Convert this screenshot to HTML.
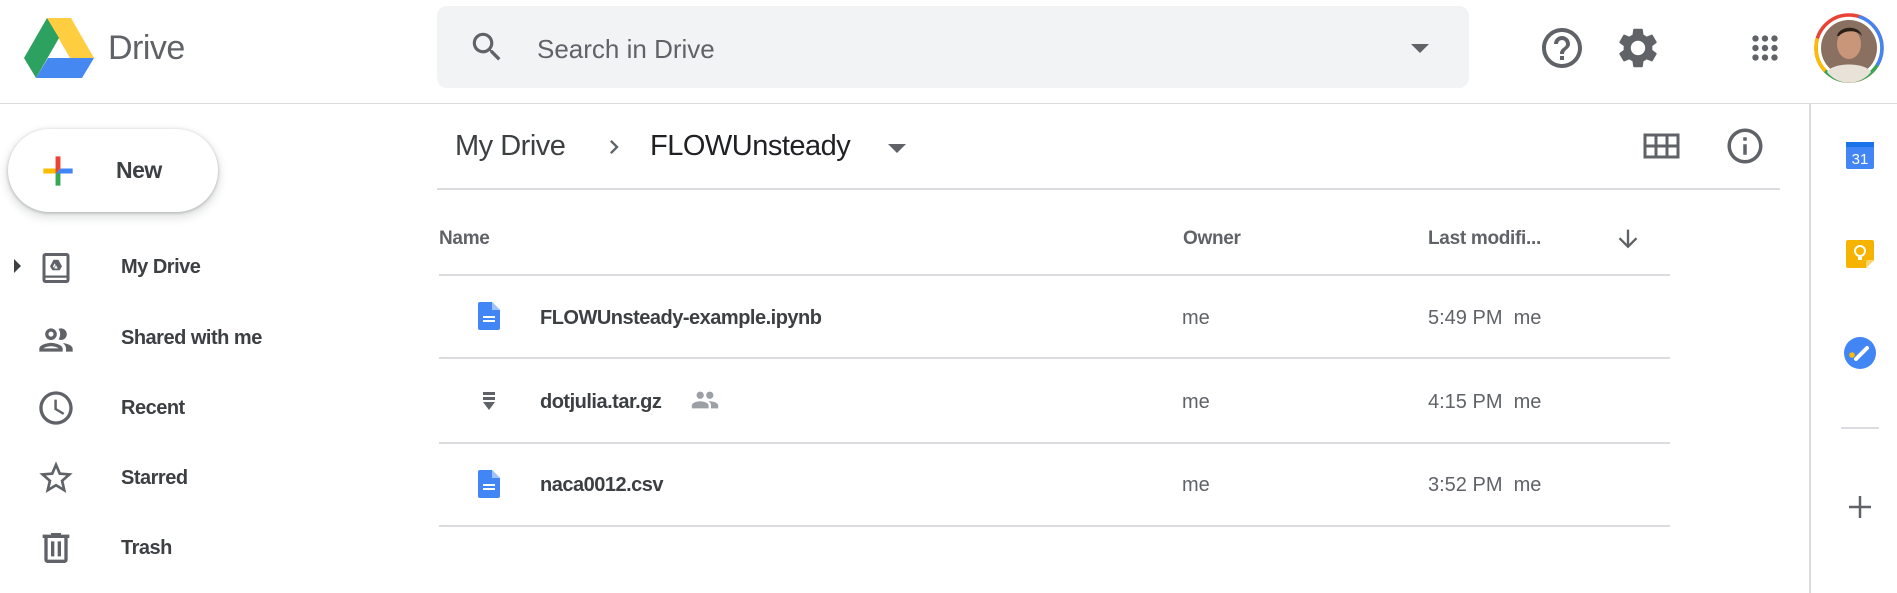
<!DOCTYPE html>
<html><head><meta charset="utf-8"><style>
*{margin:0;padding:0;box-sizing:border-box}
body{width:1897px;height:593px;overflow:hidden;background:#fff;font-family:"Liberation Sans",Arial,sans-serif;color:#3c4043;position:relative}
.a{position:absolute}
.t{white-space:nowrap}
.nav{font-size:20px;font-weight:bold;color:#3c4043;left:121px;letter-spacing:-0.5px}
.hd{font-size:19px;font-weight:bold;color:#5f6368;letter-spacing:-0.3px}
.fn{font-size:20px;font-weight:bold;color:#3c4043;left:540px;letter-spacing:-0.5px}
.gr{font-size:20px;color:#5f6368}
.ln{height:2px;background:#dadce0;left:439px;width:1231px}
</style></head><body>
<!-- header -->
<svg class="a" style="left:24px;top:18px" width="70" height="60" viewBox="0 0 70 60">
<path d="M23 0h24l23 40H46z" fill="#ffcd40"/>
<path d="M23 0L0 40l12 20 23-40z" fill="#2da160"/>
<path d="M12 60h46l12-20H24z" fill="#4688f1"/>
</svg>
<div class="a t" style="left:108px;top:29px;font-size:34px;color:#5f6368;letter-spacing:-0.5px">Drive</div>
<div class="a" style="left:437px;top:6px;width:1032px;height:82px;background:#f1f3f4;border-radius:10px"></div>
<svg class="a" style="left:468px;top:28px" width="38" height="38" viewBox="0 0 24 24"><path fill="#5f6368" d="M15.5 14h-.79l-.28-.27A6.47 6.47 0 0016 9.5 6.5 6.5 0 109.5 16c1.61 0 3.09-.59 4.23-1.57l.27.28v.79l5 4.99L20.49 19l-4.99-5zm-6 0C7.01 14 5 11.99 5 9.5S7.01 5 9.5 5 14 7.01 14 9.5 11.99 14 9.5 14z"/></svg>
<div class="a t" style="left:537px;top:34px;font-size:26px;color:#5f6368">Search in Drive</div>
<div class="a" style="left:1411px;top:44px;width:0;height:0;border-left:9px solid transparent;border-right:9px solid transparent;border-top:9px solid #5f6368"></div>
<svg class="a" style="left:1538px;top:24px" width="48" height="48" viewBox="0 0 24 24"><path fill="#5f6368" d="M11 18h2v-2h-2v2zm1-16C6.48 2 2 6.48 2 12s4.48 10 10 10 10-4.48 10-10S17.52 2 12 2zm0 18c-4.41 0-8-3.59-8-8s3.59-8 8-8 8 3.59 8 8-3.59 8-8 8zm0-14c-2.21 0-4 1.79-4 4h2c0-1.1.9-2 2-2s2 .9 2 2c0 2-3 1.75-3 5h2c0-2.25 3-2.5 3-5 0-2.21-1.79-4-4-4z"/></svg>
<svg class="a" style="left:1614px;top:24px" width="48" height="48" viewBox="0 0 24 24"><path fill="#5f6368" d="M19.14 12.94c.04-.3.06-.61.06-.94 0-.32-.02-.64-.07-.94l2.03-1.58a.49.49 0 00.12-.61l-1.92-3.32a.488.488 0 00-.59-.22l-2.39.96c-.5-.38-1.030-.7-1.62-.94l-.36-2.54a.484.484 0 00-.48-.41h-3.84c-.24 0-.43.17-.47.41l-.36 2.54c-.59.24-1.13.57-1.62.94l-2.39-.96c-.22-.08-.47 0-.59.22L2.74 8.87c-.12.21-.08.47.12.61l2.03 1.58c-.05.3-.09.63-.09.94s.02.64.07.94l-2.03 1.58a.49.49 0 00-.12.61l1.92 3.32c.12.22.37.29.59.22l2.39-.96c.5.38 1.03.7 1.62.94l.36 2.54c.05.24.24.41.48.41h3.84c.24 0 .44-.17.47-.41l.36-2.54c.59-.24 1.13-.56 1.62-.94l2.39.96c.22.08.47 0 .59-.22l1.92-3.32c.12-.22.07-.47-.12-.61l-2.01-1.58zM12 15.6c-1.98 0-3.6-1.62-3.6-3.6s1.62-3.6 3.6-3.6 3.6 1.62 3.6 3.6-1.62 3.6-3.6 3.6z"/></svg>
<svg class="a" style="left:1746px;top:29px" width="38" height="38" viewBox="0 0 24 24"><path fill="#5f6368" d="M6 8c1.1 0 2-.9 2-2s-.9-2-2-2-2 .9-2 2 .9 2 2 2zm6 12c1.1 0 2-.9 2-2s-.9-2-2-2-2 .9-2 2 .9 2 2 2zm-6 0c1.1 0 2-.9 2-2s-.9-2-2-2-2 .9-2 2 .9 2 2 2zm0-6c1.1 0 2-.9 2-2s-.9-2-2-2-2 .9-2 2 .9 2 2 2zm6 0c1.1 0 2-.9 2-2s-.9-2-2-2-2 .9-2 2 .9 2 2 2zm4-8c0 1.1.9 2 2 2s2-.9 2-2-.9-2-2-2-2 .9-2 2zm-4 2c1.1 0 2-.9 2-2s-.9-2-2-2-2 .9-2 2 .9 2 2 2zm6 6c1.1 0 2-.9 2-2s-.9-2-2-2-2 .9-2 2 .9 2 2 2zm0 6c1.1 0 2-.9 2-2s-.9-2-2-2-2 .9-2 2 .9 2 2 2z"/></svg>
<svg class="a" style="left:1813px;top:12px" width="72" height="72" viewBox="0 0 72 72">
<g fill="none" stroke-width="3.5" transform="rotate(-90 36 36)">
<circle cx="36" cy="36" r="33" stroke="#ea4335" stroke-dasharray="207 0"/>
<circle cx="36" cy="36" r="33" stroke="#4285f4" stroke-dasharray="60 147" stroke-dashoffset="-10"/>
<circle cx="36" cy="36" r="33" stroke="#34a853" stroke-dasharray="60 147" stroke-dashoffset="-70"/>
<circle cx="36" cy="36" r="33" stroke="#fbbc04" stroke-dasharray="35 172" stroke-dashoffset="-130"/>
</g>
<circle cx="36" cy="36" r="28" fill="#8a7060"/>
<ellipse cx="36" cy="32" rx="12" ry="15" fill="#c9967a"/>
<path d="M24 24c2-10 22-12 25 0l-2-2c-5-4-16-4-21 2z" fill="#2a2018"/>
<path d="M14 60c6-10 38-10 44 0a28 28 0 01-44 0z" fill="#e8e2d8"/>
</svg>
<div class="a" style="left:0;top:103px;width:1897px;height:1px;background:#dadce0"></div>
<!-- new button -->
<div class="a" style="left:8px;top:129px;width:210px;height:83px;border-radius:42px;background:#fff;box-shadow:0 1px 3px rgba(60,64,67,.35),0 4px 8px 3px rgba(60,64,67,.12)"></div>
<svg class="a" style="left:36px;top:149px" width="44" height="44" viewBox="0 0 36 36"><path fill="#34A853" d="M16 16v14h4V20z"/><path fill="#4285F4" d="M30 16H20l-4 4h14z"/><path fill="#FBBC05" d="M6 16v4h10l4-4z"/><path fill="#EA4335" d="M20 16V6h-4v14z"/></svg>
<div class="a t" style="left:116px;top:157px;font-size:23px;font-weight:bold;color:#3c4043;letter-spacing:-0.5px">New</div>
<!-- sidebar -->
<div class="a" style="left:14px;top:259px;width:0;height:0;border-top:7px solid transparent;border-bottom:7px solid transparent;border-left:7px solid #3c4043"></div>
<svg class="a" style="left:38px;top:250px" width="36" height="36" viewBox="0 0 24 24"><path fill="#5f6368" d="M19 2H5a2 2 0 00-2 2v16a2 2 0 002 2h14a2 2 0 002-2V4a2 2 0 00-2-2zm0 15H5V4h14v13zm0 3H5v-1.5h14V20zM9.6 13.5h4.8l1.6-2.6-2.4-4.4h-3.2L8 10.9zm1.2-1.2 1.2-2.1 1.2 2.1zM10 10.9l1.1-2 .6 1-1.1 2z"/></svg>
<div class="a t nav" style="top:256px">My Drive</div>
<svg class="a" style="left:36px;top:320px" width="40" height="40" viewBox="0 0 24 24"><path fill="#5f6368" d="M9 13.75c-2.34 0-7 1.17-7 3.5V19h14v-1.75c0-2.33-4.66-3.5-7-3.5zM4.34 17c.84-.58 2.87-1.25 4.660-1.25s3.82.67 4.66 1.25H4.34zM9 12c1.93 0 3.5-1.57 3.5-3.5S10.93 5 9 5 5.5 6.570 5.5 8.5 7.07 12 9 12zm0-5c.83 0 1.5.67 1.5 1.5S9.83 10 9 10s-1.5-.67-1.5-1.5S8.17 7 9 7zm7.04 6.81c1.16.84 1.96 1.96 1.96 3.44V19h4v-1.75c0-2.02-3.5-3.17-5.96-3.44zM15 12c1.93 0 3.5-1.57 3.5-3.5S16.93 5 15 5c-.54 0-1.04.13-1.5.35.63.89 1 1.98 1 3.15s-.37 2.26-1 3.15c.46.22.96.35 1.5.35z"/></svg>
<div class="a t nav" style="top:327px">Shared with me</div>
<svg class="a" style="left:36px;top:388px" width="40" height="40" viewBox="0 0 24 24"><path fill="#5f6368" d="M11.99 2C6.47 2 2 6.48 2 12s4.47 10 9.99 10C17.52 22 22 17.52 22 12S17.52 2 11.99 2zM12 20c-4.42 0-8-3.58-8-8s3.58-8 8-8 8 3.58 8 8-3.58 8-8 8zm.5-13H11v6l5.25 3.15.75-1.23-4.5-2.67z"/></svg>
<div class="a t nav" style="top:397px">Recent</div>
<svg class="a" style="left:36px;top:458px" width="40" height="40" viewBox="0 0 24 24"><path fill="#5f6368" d="M22 9.24l-7.19-.62L12 2 9.19 8.63 2 9.24l5.46 4.73L5.82 21 12 17.27 18.18 21l-1.63-7.03L22 9.24zM12 15.4l-3.76 2.27 1-4.28-3.32-2.88 4.38-.38L12 6.1l1.71 4.04 4.38.38-3.32 2.88 1 4.28L12 15.4z"/></svg>
<div class="a t nav" style="top:467px">Starred</div>
<svg class="a" style="left:36px;top:528px" width="40" height="40" viewBox="0 0 24 24"><path fill="#5f6368" d="M15 4V3H9v1H4v2h1v13c0 1.1.9 2 2 2h10c1.1 0 2-.9 2-2V6h1V4h-5zm2 15H7V6h10v13zM9 8h2v9H9zm4 0h2v9h-2z"/></svg>
<div class="a t nav" style="top:537px">Trash</div>
<!-- breadcrumb -->
<div class="a t" style="left:455px;top:130px;font-size:29px;color:#3c4043;letter-spacing:-0.5px">My Drive</div>
<svg class="a" style="left:600px;top:133px" width="28" height="28" viewBox="0 0 24 24"><path fill="#5f6368" d="M10 6L8.59 7.41 13.17 12l-4.58 4.59L10 18l6-6z"/></svg>
<div class="a t" style="left:650px;top:130px;font-size:29px;color:#202124;letter-spacing:-0.5px">FLOWUnsteady</div>
<div class="a" style="left:888px;top:144px;width:0;height:0;border-left:9px solid transparent;border-right:9px solid transparent;border-top:9px solid #5f6368"></div>
<svg class="a" style="left:1643px;top:131px" width="37" height="30" viewBox="0 0 37 30"><path fill="none" stroke="#5f6368" stroke-width="3" d="M2 4h33v22H2zM2 15h33M13 4v22M24 4v22"/></svg>
<svg class="a" style="left:1724px;top:125px" width="42" height="42" viewBox="0 0 24 24"><path fill="#5f6368" d="M11 7h2v2h-2zm0 4h2v6h-2zm1-9C6.48 2 2 6.48 2 12s4.48 10 10 10 10-4.48 10-10S17.52 2 12 2zm0 18c-4.41 0-8-3.59-8-8s3.59-8 8-8 8 3.59 8 8-3.59 8-8 8z"/></svg>
<div class="a" style="left:437px;top:188px;width:1343px;height:2px;background:#dadce0"></div>
<div class="a" style="left:1809px;top:104px;width:2px;height:489px;background:#dadce0"></div>
<!-- right panel -->
<svg class="a" style="left:1845px;top:140px" width="30" height="30" viewBox="0 0 30 30"><rect x="1" y="2" width="28" height="27" rx="2" fill="#4285f4"/><rect x="1" y="2" width="28" height="5" fill="#1a73e8"/><text x="15" y="24" text-anchor="middle" font-family="Liberation Sans" font-size="15" fill="#fff">31</text></svg>
<svg class="a" style="left:1845px;top:239px" width="30" height="30" viewBox="0 0 30 30"><path d="M3 1h24a2 2 0 012 2v18l-8 8H3a2 2 0 01-2-2V3a2 2 0 012-2z" fill="#f6b400"/><path d="M29 21l-8 8v-6a2 2 0 012-2z" fill="#f9d66b"/><circle cx="15" cy="12" r="5" fill="none" stroke="#fff" stroke-width="2"/><path d="M13 18h4v3h-4z" fill="#fff"/></svg>
<svg class="a" style="left:1843px;top:336px" width="34" height="34" viewBox="0 0 34 34"><circle cx="17" cy="17" r="16" fill="#4285f4"/><circle cx="9" cy="19" r="2.8" fill="#fbbc04"/><path d="M13 23l11-11" stroke="#fff" stroke-width="4" stroke-linecap="round"/></svg>
<div class="a" style="left:1841px;top:427px;width:38px;height:2px;background:#dadce0"></div>
<svg class="a" style="left:1848px;top:495px" width="24" height="24" viewBox="0 0 24 24"><path d="M12 1v22M1 12h22" stroke="#5f6368" stroke-width="2.5"/></svg>
<!-- table -->
<div class="a t hd" style="left:439px;top:228px">Name</div>
<div class="a t hd" style="left:1183px;top:228px">Owner</div>
<div class="a t hd" style="left:1428px;top:228px">Last modifi...</div>
<svg class="a" style="left:1614px;top:225px" width="28" height="28" viewBox="0 0 24 24"><path fill="#5f6368" d="M20 12l-1.41-1.41L13 16.17V4h-2v12.17l-5.58-5.59L4 12l8 8 8-8z"/></svg>
<div class="a ln" style="top:274px"></div>
<svg class="a" style="left:478px;top:302px" width="22" height="28" viewBox="0 0 22 28"><path d="M2 0h12l8 8v18a2 2 0 01-2 2H2a2 2 0 01-2-2V2a2 2 0 012-2z" fill="#4285f4"/><path d="M14 0v8h8z" fill="#a1c2fa"/><path d="M5 15h12M5 19h12" stroke="#fff" stroke-width="2"/></svg>
<div class="a t fn" style="top:307px">FLOWUnsteady-example.ipynb</div>
<div class="a t gr" style="left:1182px;top:307px">me</div>
<div class="a t gr" style="left:1428px;top:307px">5:49 PM&nbsp; me</div>
<div class="a ln" style="top:357px"></div>
<svg class="a" style="left:482px;top:392px" width="14" height="20" viewBox="0 0 14 20"><path d="M1 0h12v3H1zM1 5h12v3H1zM1 10h12l-6 8z" fill="#5f6368"/></svg>
<div class="a t fn" style="top:391px">dotjulia.tar.gz</div>
<svg class="a" style="left:690px;top:388px" width="30" height="24" viewBox="0 0 24 20"><path fill="#9aa0a6" d="M16 9c1.66 0 2.99-1.34 2.99-3S17.66 3 16 3s-3 1.34-3 3 1.34 3 3 3zm-8 0c1.66 0 2.99-1.34 2.99-3S9.66 3 8 3 5 4.34 5 6s1.34 3 3 3zm0 2c-2.33 0-7 1.17-7 3.5V17h14v-2.5C15 12.17 10.33 11 8 11zm8 0c-.29 0-.62.02-.97.05 1.16.84 1.97 1.97 1.97 3.45V17h6v-2.5c0-2.33-4.67-3.5-7-3.5z"/></svg>
<div class="a t gr" style="left:1182px;top:391px">me</div>
<div class="a t gr" style="left:1428px;top:391px">4:15 PM&nbsp; me</div>
<div class="a ln" style="top:442px"></div>
<svg class="a" style="left:478px;top:470px" width="22" height="28" viewBox="0 0 22 28"><path d="M2 0h12l8 8v18a2 2 0 01-2 2H2a2 2 0 01-2-2V2a2 2 0 012-2z" fill="#4285f4"/><path d="M14 0v8h8z" fill="#a1c2fa"/><path d="M5 15h12M5 19h12" stroke="#fff" stroke-width="2"/></svg>
<div class="a t fn" style="top:474px">naca0012.csv</div>
<div class="a t gr" style="left:1182px;top:474px">me</div>
<div class="a t gr" style="left:1428px;top:474px">3:52 PM&nbsp; me</div>
<div class="a ln" style="top:525px"></div>
</body></html>
